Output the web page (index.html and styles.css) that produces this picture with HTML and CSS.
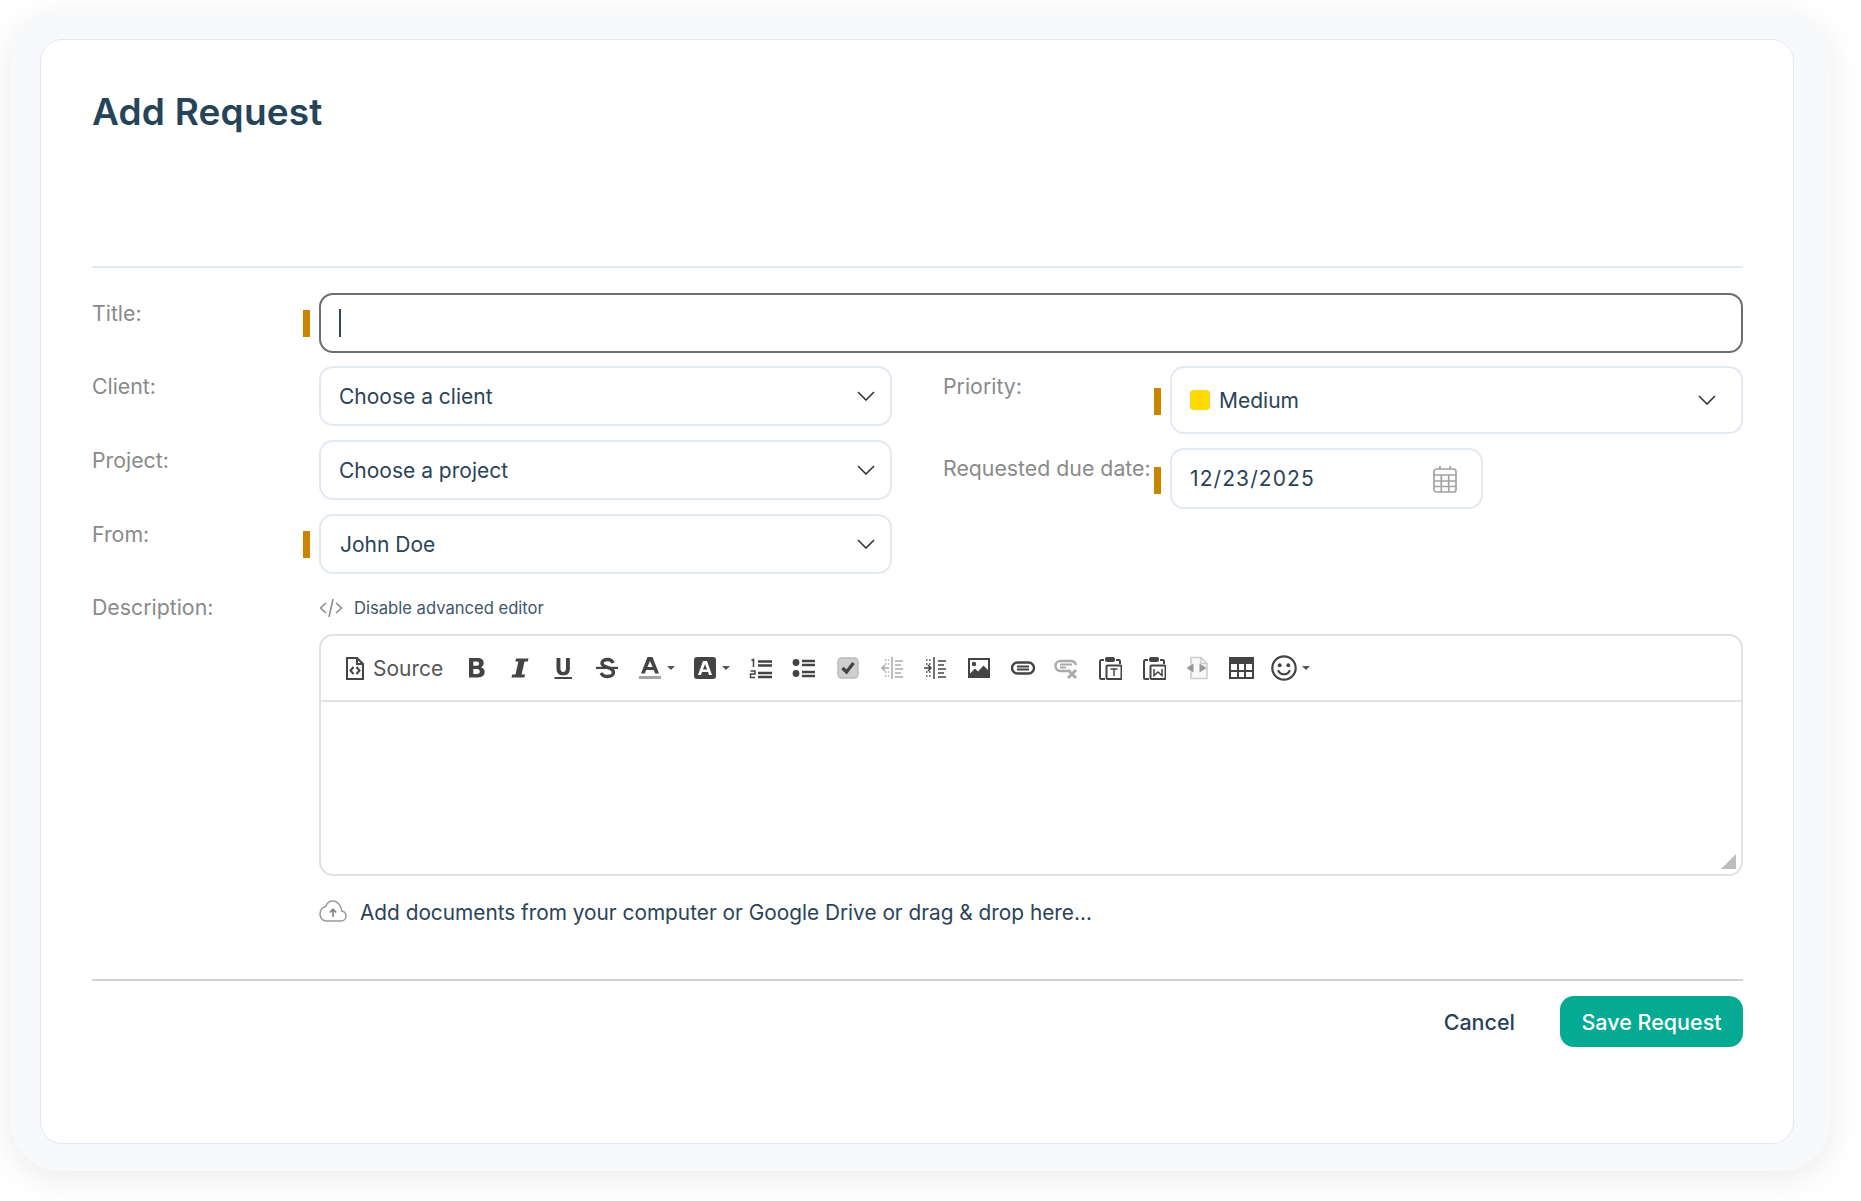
FILE: index.html
```html
<!DOCTYPE html>
<html lang="en">
<head>
<meta charset="utf-8">
<title>Add Request</title>
<link rel="stylesheet" href="styles.css">
</head>
<body>
<div class="panel">
<main class="card">
  <h1 class="title">Add Request</h1>
  <div class="rule"></div>

  <div class="row row-title">
    <div class="label">Title:</div>
    <div class="field field-focus req"><span class="caret"></span></div>
  </div>

  <div class="cols">
    <div class="col">
      <div class="row">
        <div class="label">Client:</div>
        <div class="field select"><span>Choose a client</span><svg class="chev" viewBox="0 0 18 10"><path d="M1 1l8 8 8-8"/></svg></div>
      </div>
      <div class="row">
        <div class="label">Project:</div>
        <div class="field select"><span>Choose a project</span><svg class="chev" viewBox="0 0 18 10"><path d="M1 1l8 8 8-8"/></svg></div>
      </div>
      <div class="row">
        <div class="label">From:</div>
        <div class="field select from req"><span>John Doe</span><svg class="chev" viewBox="0 0 18 10"><path d="M1 1l8 8 8-8"/></svg></div>
      </div>
    </div>
    <div class="col">
      <div class="row">
        <div class="label">Priority:</div>
        <div class="field select tall req"><span class="prio"><i class="swatch"></i>Medium</span><svg class="chev" viewBox="0 0 18 10"><path d="M1 1l8 8 8-8"/></svg></div>
      </div>
      <div class="row">
        <div class="label">Requested due date:</div>
        <div class="field select date req"><span class="date-text">12/23/2025</span>
          <svg class="cal" viewBox="0 0 24 28"><path d="M7 1v4M17 1v4" /><rect x="1" y="4" width="22" height="23" rx="2.5"/><path d="M1 10h22M1 16h22M1 21.500h22M8.300 10v17M15.700 10v17"/></svg>
        </div>
      </div>
    </div>
  </div>

  <div class="row row-desc">
    <div class="label">Description:</div>
    <div class="desc">
      <div class="toggle">
        <svg class="code" viewBox="0 0 24 20"><path d="M7 5l-5.500 5L7 15M17 5l5.500 5L17 15M14 1L10 19"/></svg>
        <span>Disable advanced editor</span>
      </div>
      <div class="editor">
        <div class="toolbar">
          <div class="tb-source">
            <svg class="ic-src" viewBox="0 0 18 23"><path class="ln" d="M1 1h10l6 6v15H1zM11 1v6h6"/><path class="ln2" d="M7.500 10l-3 3.500 3 3.500M10.500 10l3 3.500-3 3.500"/></svg>
            <span>Source</span>
          </div>
          <div class="tb"><svg class="ic" viewBox="0 0 24 24"><path class="f" d="M5 2h8.500c4 0 6.200 2 6.200 5 0 2-1 3.500-2.700 4.200 2.300.6 3.700 2.300 3.700 4.600 0 3.500-2.500 5.700-6.600 5.700H5zm4.300 3.500v4.300h3.300c1.600 0 2.500-.8 2.500-2.200s-.9-2.100-2.500-2.100zm0 7.500v5h3.700c1.800 0 2.800-.9 2.800-2.500 0-1.500-1-2.500-2.800-2.500z" fill-rule="evenodd"/></svg></div>
          <div class="tb"><svg class="ic" viewBox="0 0 24 24"><path class="f" d="M8 2.500h12.500l-.6 3h-3.400l-2.900 13h3.400l-.6 3H3.500l.6-3h3.400l2.900-13H7.400z"/></svg></div>
          <div class="tb"><svg class="ic" viewBox="0 0 24 24"><path class="f" d="M5.500 2h3.900v10.300c0 2.400 1 3.700 2.800 3.700s2.800-1.300 2.800-3.700V2h3.900v10.400c0 4.500-2.500 6.900-6.700 6.900s-6.700-2.400-6.700-6.900zM3.500 21h17.500v2H3.500z"/></svg></div>
          <div class="tb"><svg class="ic" viewBox="0 0 24 24"><path class="f" d="M1 10.800h22v2.200H1z"/><path class="s3" d="M18 7c-.6-2-2.800-3.500-5.600-3.500-3.300 0-5.400 1.500-5.400 3.800 0 4.800 11.500 3.500 11.500 9 0 2.600-2.500 4.200-6 4.200-3.200 0-5.400-1.400-6.300-3.700"/></svg></div>
          <div class="tb tb-drop">
            <svg class="ic" viewBox="0 0 24 24"><path class="f" d="M9.500 1h5l6.500 16.500h-3.800L15.800 14H8.200l-1.400 3.500H3zm2.500 4L9.400 11h5.200z" fill-rule="evenodd"/><rect x="1" y="20" width="22" height="3" fill="#a3a3a3"/></svg><i class="tri"></i>
          </div>
          <div class="tb tb-drop">
            <svg class="ic" viewBox="0 0 24 24"><rect x="1" y="1" width="22" height="22" rx="3" fill="#444"/><path d="M10 5h4l5 14h-3l-1-3H9l-1 3H5zm2 3.300L9.900 13.500h4.200z" fill="#fff" fill-rule="evenodd"/></svg><i class="tri"></i>
          </div>
          <div class="tb"><svg class="ic" viewBox="0 0 24 24"><path class="s" d="M9 5.500h14M9 9.500h14M9 17h14M9 21h14"/><path class="thin" d="M2.500 4.500L4.500 3.500v7.500M1.500 15h4.500v3H1.500v3.500H6"/></svg></div>
          <div class="tb"><svg class="ic" viewBox="0 0 24 24"><circle class="f" cx="4" cy="6.500" r="3.400"/><circle class="f" cx="4" cy="17.500" r="3.400"/><path class="s" d="M10 5h13M10 9h13M10 16h13M10 20h13"/></svg></div>
          <div class="tb"><svg class="ic" viewBox="0 0 24 24"><rect x="2" y="2" width="20" height="20" rx="3.500" fill="#cfcfcf" stroke="#bcbcbc" stroke-width="1.500"/><path d="M6.500 12l4 4 7-9" fill="none" stroke="#444" stroke-width="3.400"/></svg></div>
          <div class="tb dim"><svg class="ic" viewBox="0 0 24 24"><path class="thin" d="M12 1v22M15 5h8M15 9h6M15 13h8M15 17h6M15 21h8M9 12H2M5 9l-3 3 3 3"/><path class="dots" d="M5 4h4M5 8h4M5 16h4M5 20h4"/></svg></div>
          <div class="tb"><svg class="ic" viewBox="0 0 24 24"><path class="thin" d="M11 1v22M15 5h8M15 9h6M15 13h8M15 17h6M15 21h8M1 12h7M5 9l3 3-3 3"/><path class="dots" d="M3 4h5M3 8h5M3 16h5M3 20h5"/></svg></div>
          <div class="tb"><svg class="ic" viewBox="0 0 24 24"><path class="f" fill-rule="evenodd" d="M1 2h22v20H1zM3 4v13.500l5-5 3 3 5.500-6 4.500 4.500V4z"/><circle class="f" cx="7" cy="8" r="2.200"/></svg></div>
          <div class="tb"><svg class="ic" viewBox="0 0 24 24"><rect class="link" x="1" y="6.500" width="22" height="11" rx="5.500"/><path class="link2" d="M6 10.500h12M6 13.500h12"/></svg></div>
          <div class="tb dim"><svg class="ic" viewBox="0 0 24 24"><path class="link" d="M14 15H6.500a5 5 0 010-10h11a5 5 0 014.500 4"/><path class="link2" d="M6 8.500h12M6 11.500h6"/><path d="M14 14l8 8M22 14l-8 8" fill="none" stroke="#444" stroke-width="3"/></svg></div>
          <div class="tb"><svg class="ic" viewBox="0 0 24 24"><path class="ln" d="M6 4H3.500A1.500 1.500 0 002 5.500v16A1.500 1.500 0 003.500 23H7M18 4h2.500A1.500 1.500 0 0122 5.500V8"/><rect class="f" x="7" y="1" width="10" height="5" rx="2"/><rect class="ln" x="8.500" y="9.500" width="15" height="13.500" rx="1"/><path class="thin" d="M12.500 13h7M16 13v7"/></svg></div>
          <div class="tb"><svg class="ic" viewBox="0 0 24 24"><path class="ln" d="M6 4H3.500A1.500 1.500 0 002 5.500v16A1.500 1.500 0 003.500 23H7M18 4h2.500A1.500 1.500 0 0122 5.500V8"/><rect class="f" x="7" y="1" width="10" height="5" rx="2"/><rect class="ln" x="8.500" y="9.500" width="15" height="13.500" rx="1"/><path class="thin" d="M12 13v6.500l4-3.500 4 3.500V13"/></svg></div>
          <div class="tb fade"><svg class="ic" viewBox="0 0 24 24"><path d="M6 1.500h10l6 6V22.500H6z" fill="#f4f4f4" stroke="#aaa" stroke-width="1.500"/><path d="M16 1.500v6h6" fill="none" stroke="#aaa" stroke-width="1.500"/><path d="M8.500 7.500L1.500 12l7 4.500zM14.500 7.500l7 4.500-7 4.500z" fill="#555"/></svg></div>
          <div class="tb"><svg class="ic ic-table" viewBox="0 0 25 22"><path class="f" fill-rule="evenodd" d="M0 0h25v22H0zM2 7v6h6V7zm8 0v6h5V7zm7 0v6h6V7zM2 15v5h6v-5zm8 0v5h5v-5zm7 0v5h6v-5z"/></svg></div>
          <div class="tb tb-drop">
            <svg class="ic ic-smile" viewBox="0 0 24 24"><circle class="ln" cx="12" cy="12" r="10.800"/><circle class="f" cx="8" cy="9.500" r="1.800"/><circle class="f" cx="16" cy="9.500" r="1.800"/><path class="ln" d="M6.500 14c1.200 2.500 3 3.800 5.500 3.800s4.300-1.300 5.500-3.800"/></svg><i class="tri"></i>
          </div>
        </div>
        <div class="editor-body"><svg class="grip" viewBox="0 0 16 16"><path d="M16 0v16H0z" fill="#bdbdbd"/></svg></div>
      </div>
      <div class="upload">
        <svg class="cloud" viewBox="0 0 28 22"><path d="M7 21h15c3 0 5-2.300 5-5 0-2.600-1.800-4.600-4.300-5C22.300 5.500 18.500 1 14 1 10.500 1 7.800 3.200 7 6.200 3.500 7 1 10.300 1 14c0 4 2.800 7 6 7z"/><path class="arrow" d="M14 17V9.500M10.800 12.500L14 9.300l3.200 3.200"/></svg>
        <span>Add documents from your computer or Google Drive or drag &amp; drop here...</span>
      </div>
    </div>
  </div>

  <div class="rule-bottom"></div>
  <div class="actions">
    <span class="cancel">Cancel</span>
    <span class="save">Save Request</span>
  </div>
</main>
</div>
</body>
</html>
```

FILE: styles.css
```css
* { box-sizing: border-box; }
html, body { margin: 0; padding: 0; background: #fff; }
body {
  font-family: Inter, "Liberation Sans", sans-serif;
  color: #2a4358;
  height: 1201px;
  overflow: hidden;
}
.panel {
  margin: 10px 30px 0 10px;
  height: 1161px;
  padding: 29px 37px 0 30px;
  background: #f8f9fb;
  border-radius: 50px;
  box-shadow: 0 8px 32px rgba(0,0,0,.08);
}
.card {
  height: 1105px;
  padding: 48px 50px 0 51px;
  background: #fff;
  border: 1px solid #e3e9f3;
  border-radius: 22px;
}
.title {
  margin: 0;
  height: 48px;
  font-size: 37px;
  line-height: 48px;
  font-weight: 600;
  letter-spacing: .2px;
  color: #25445a;
}
.rule { height: 2px; margin-top: 130px; background: #e3e9f3; }
.row { display: flex; }
.row-title { margin-top: 25px; }
.label {
  flex: 0 0 227px;
  padding-top: 7px;
  font-size: 21.300px;
  line-height: 26px;
  color: #8a8a8a;
  white-space: nowrap;
}
.field {
  position: relative;
  flex: 1;
  height: 60px;
  border: 2px solid #e3e9f3;
  border-radius: 14px;
  background: #fff;
  font-size: 21px;
}
.field-focus { height: 60px; border-color: #6e6e6e; }
.caret {
  position: absolute;
  left: 18px;
  top: 14px;
  width: 2px;
  height: 28px;
  background: #2a4a62;
}
.req::before {
  content: "";
  position: absolute;
  left: -18px;
  top: calc(50% - 13px);
  width: 7px;
  height: 27px;
  background: #c98500;
}
.cols {
  display: grid;
  grid-template-columns: 800px 800px;
  column-gap: 51px;
  margin-top: 13px;
}
.col { display: flex; flex-direction: column; row-gap: 14px; }
.select {
  display: flex;
  align-items: center;
  justify-content: space-between;
  padding: 0 15px 0 18px;
}
.from { padding-left: 19px; }
.chev { flex: none; width: 18px; height: 10px; fill: none; stroke: #333; stroke-width: 1.600; }
.tall { height: 68px; padding-right: 25px; }
.tall::before, .date::before { top: calc(50% - 12px); }
.prio { display: flex; align-items: center; }
.swatch {
  width: 20px;
  height: 20px;
  margin-right: 9px;
  border-radius: 4px;
  background: #ffd900;
}
.date { flex: 0 0 313px; height: 61px; padding-right: 24px; }
.date-text { letter-spacing: 1.100px; }
.cal { width: 24px; height: 28px; fill: none; stroke: #a3a3a3; stroke-width: 1.700; }
.row-desc { margin-top: 13px; }
.desc { flex: 1; }
.toggle {
  display: flex;
  align-items: center;
  height: 42px;
  margin-bottom: 5px;
  font-size: 16.600px;
  color: #3f566a;
}
.code { width: 24px; height: 20px; margin-right: 11px; fill: none; stroke: #888; stroke-width: 1.500; }
.editor {
  position: relative;
  height: 242px;
  border: 2px solid #e2e2e2;
  border-radius: 14px;
}
.toolbar {
  display: flex;
  align-items: center;
  height: 66px;
  padding-left: 25px;
  border-bottom: 2px solid #e2e2e2;
}
.tb-source {
  display: flex;
  align-items: center;
  width: 108px;
  font-size: 21px;
  color: #555;
}
.ic-src { width: 18px; height: 23px; margin-right: 9px; }
.ln { fill: none; stroke: #444; stroke-width: 2; }
.ln2 { fill: none; stroke: #444; stroke-width: 2; }
.tb {
  display: flex;
  align-items: center;
  justify-content: center;
  width: 43.700px;
  height: 100%;
}
.tb-drop { width: 55px; justify-content: flex-start; padding-left: 9px; }
.ic { flex: none; width: 24px; height: 24px; }
.ic-table { width: 25px; height: 22px; }
.ic-smile { width: 26px; height: 26px; margin-left: -1px; }
.f { fill: #444; }
.s { fill: none; stroke: #444; stroke-width: 2.600; }
.s3 { fill: none; stroke: #444; stroke-width: 3.400; }
.thin { fill: none; stroke: #444; stroke-width: 1.500; }
.dots { fill: none; stroke: #444; stroke-width: 1.500; stroke-dasharray: 1.500 1.500; }
.link { fill: none; stroke: #444; stroke-width: 2.400; }
.link2 { fill: none; stroke: #444; stroke-width: 1.800; }
.dim { opacity: .45; }
.fade { opacity: .6; }
.tri {
  flex: none;
  width: 0;
  height: 0;
  margin-left: 5px;
  border-left: 4.500px solid transparent;
  border-right: 4.500px solid transparent;
  border-top: 4.500px solid #555;
}
.editor-body { position: relative; height: 172px; }
.grip { position: absolute; right: 5px; bottom: 5px; width: 15px; height: 15px; }
.upload {
  display: flex;
  align-items: center;
  height: 72px;
  font-size: 20.800px;
}
.cloud { width: 28px; height: 22px; margin: -2px 13px 0 0; fill: none; stroke: #9a9a9a; stroke-width: 1.500; }
.arrow { stroke: #777; }
.rule-bottom { height: 2px; margin-top: 31px; background: #d2d2d2; }
.actions {
  display: flex;
  justify-content: flex-end;
  align-items: center;
  column-gap: 45px;
  margin-top: 15px;
}
.cancel { font-size: 21.500px; font-weight: 500; color: #2a4358; }
.save {
  display: flex;
  align-items: center;
  justify-content: center;
  width: 183px;
  height: 51px;
  border-radius: 14px;
  background: #04aa92;
  color: #fff;
  font-size: 21.500px;
  font-weight: 500;
}
```
